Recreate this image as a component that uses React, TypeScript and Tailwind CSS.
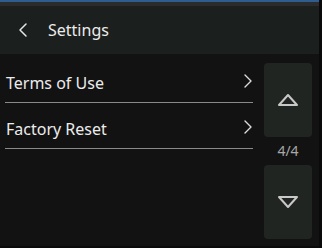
import { ChevronLeft, ChevronRight } from "lucide-react";

function Row({ label }: { label: string }) {
  return (
    <div className="flex h-[46px] items-center justify-between border-b border-[#8a8a8a] pl-[1px] pt-[6px]">
      <span className="text-[16px] text-[#ececec]">{label}</span>
      <ChevronRight size={24} strokeWidth={1.4} className="mr-[-7px] mt-[-4px] text-[#dcdcdc]" />
    </div>
  );
}

function ArrowButton({ up }: { up?: boolean }) {
  return (
    <div className="flex h-[74px] w-[48px] items-center justify-center rounded-[4px] bg-[#212522]">
      <svg width="22" height="14" viewBox="0 0 22 14">
        <polygon
          points={up ? "11,2 20,12 2,12" : "2,2 20,2 11,12"}
          fill="none"
          stroke="#c8c8c8"
          strokeWidth="2"
          strokeLinejoin="round"
        />
      </svg>
    </div>
  );
}

export default function App() {
  return (
    <div
      className="h-[248px] w-[322px] bg-[#0a0a0a]"
      style={{ fontFamily: '"Noto Sans", sans-serif' }}
    >
      <div className="flex h-[246px] w-[319px] flex-col bg-[#121212]">
        <div className="h-[2px] bg-[#2e5d8f]" />
        <div className="h-[4px] bg-[#2b2b2b]" />
        <div className="flex h-[48px] items-center bg-[#1b1f1d]">
          <ChevronLeft size={24} strokeWidth={1.5} className="ml-[11px] text-[#e6e6e6]" />
          <span className="ml-[13px] text-[16px] text-[#ececec]">Settings</span>
        </div>
        <div className="flex flex-1">
          <div className="flex-1 pl-[5px] pt-[3px]">
            <Row label="Terms of Use" />
            <Row label="Factory Reset" />
          </div>
          <div className="ml-[11px] mr-[7px] flex w-[48px] flex-col items-center pt-[9px]">
            <ArrowButton up />
            <span className="my-[3px] text-[14px] leading-[22px] text-[#a8a8a8]">4/4</span>
            <ArrowButton />
          </div>
        </div>
      </div>
    </div>
  );
}
